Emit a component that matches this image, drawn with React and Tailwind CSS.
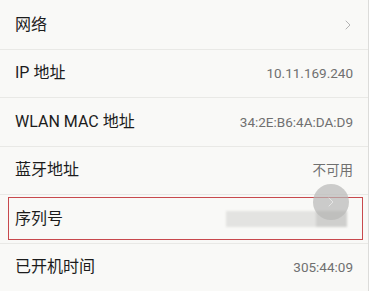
import { ChevronRight } from "lucide-react";

const rows = [
  { label: "网络", chevron: true },
  { label: "IP 地址", value: "10.11.169.240" },
  { label: "WLAN MAC 地址", value: "34:2E:B6:4A:DA:D9" },
  { label: "蓝牙地址", value: "不可用" },
  { label: "序列号", hidden: true },
  { label: "已开机时间", value: "305:44:09" },
];

function Row({ label, value, chevron, hidden }) {
  return (
    <div className="pl-[15px] pr-[15px] h-[48.5px] flex items-center justify-between border-b border-[#e9e9e6]">
      <span className="text-[16px] text-[#1c1c1c]">{label}</span>
      {value && <span className="text-[13.5px] text-[#707070]">{value}</span>}
      {chevron && <ChevronRight className="w-4 h-4 text-[#b4b4b4] mr-[-3px]" strokeWidth={1.5} />}
      {hidden && (
        <div className="flex h-[16px] w-[121px] mr-[6px] blur-[1px]">
          <div className="flex-1 bg-[#e3e3e1]" />
          <div className="w-[31px] bg-[#cfcfcd]" />
        </div>
      )}
    </div>
  );
}

export default function App() {
  return (
    <div
      className="w-[376px] h-[291px] bg-white overflow-hidden"
      style={{ fontFamily: 'Roboto, "Noto Sans CJK SC", sans-serif' }}
    >
      <div className="relative w-[369px] h-full bg-[#f9f9f7] border-r border-[#dcdcda] pt-px">
        {rows.map((r) => (
          <Row key={r.label} {...r} />
        ))}
        {/* annotation box */}
        <div className="absolute left-[8px] top-[197px] w-[355px] h-[43px] border border-[#c8494d] pointer-events-none" />
        {/* floating button */}
        <div className="absolute left-[313px] top-[184px] w-[36px] h-[36px] rounded-full bg-[#b8b8b6]/70 flex items-center justify-center">
          <ChevronRight className="w-4 h-4 text-white/50" strokeWidth={1.5} />
        </div>
      </div>
    </div>
  );
}
